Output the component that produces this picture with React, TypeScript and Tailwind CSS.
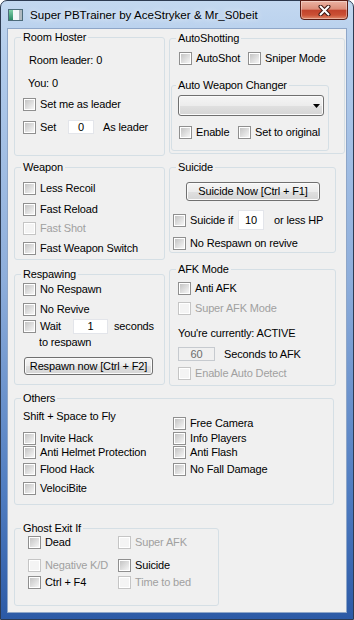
import clsx from 'clsx';
import type { ReactNode } from 'react';

// win7 style checkbox square
function Box({ disabled }: { disabled?: boolean }) {
  return (
    <span
      className={clsx(
        'flex h-[13px] w-[13px] shrink-0 items-center justify-center border bg-white',
        disabled ? 'border-[#c5c5c5]' : 'border-[#8f8f8f]'
      )}
    >
      <span
        className={clsx(
          'h-[9px] w-[9px]',
          disabled ? 'bg-[#f4f4f4]' : 'bg-linear-to-br from-[#c4c4c4] to-[#f6f6f6]'
        )}
      />
    </span>
  );
}

function Check({ label, disabled, className }: { label: string; disabled?: boolean; className?: string }) {
  return (
    <div className={clsx('flex h-[13px] items-center', className)}>
      <Box disabled={disabled} />
      <span className={clsx('ml-[4px] whitespace-nowrap leading-[13px]', disabled && 'text-[#a0a0a0]')}>{label}</span>
    </div>
  );
}

function Field({ children, className, disabled }: { children: ReactNode; className?: string; disabled?: boolean }) {
  return (
    <div
      className={clsx(
        'flex shrink-0 items-center justify-center border leading-[13px]',
        disabled ? 'border-[#c6cacf] bg-[#f0f0f0] text-[#6d6d6d]' : 'border-[#e3e5ea] bg-white',
        className
      )}
    >
      {children}
    </div>
  );
}

const buttonLook =
  'flex items-center justify-center rounded-[3px] border border-[#707070] bg-[linear-gradient(180deg,#f5f5f5_0%,#ececec_50%,#e0e0e0_51%,#d5d5d5_100%)] shadow-[inset_0_0_0_1px_#fbfbfb] leading-[13px]';

// group box: the title sits on the top border
function Group({
  title,
  className,
  titleClass,
  children,
}: {
  title: string;
  className?: string;
  titleClass?: string;
  children?: ReactNode;
}) {
  return (
    <div className={clsx('shrink-0 rounded-[3px] border border-[#d5dfe5]', className)}>
      <div className={clsx('-mt-[7px] w-fit bg-[#f0f0f0] px-[2px] leading-[13px]', titleClass ?? 'ml-[6px]')}>{title}</div>
      {children}
    </div>
  );
}

function TitleIcon() {
  return (
    <svg width="15" height="12" viewBox="0 0 15 12" className="ml-[1px] shrink-0">
      <defs>
        <linearGradient id="ic" x1="0" y1="0" x2="0" y2="1">
          <stop offset="0" stopColor="#7fcfa8" />
          <stop offset="1" stopColor="#2c8a66" />
        </linearGradient>
      </defs>
      <rect x="0.5" y="0.5" width="14" height="11" fill="#f4f7f9" stroke="#4d6b7a" />
      <rect x="1" y="1" width="4" height="10" fill="url(#ic)" />
      <rect x="11" y="1" width="3" height="10" fill="#aeb8bf" />
    </svg>
  );
}

function CloseButton() {
  return (
    <div className="-mr-[1px] -mt-[1px] flex h-[20px] w-[48px] shrink-0 items-center justify-center self-start rounded-b-[4px] border border-[#5a1d15] bg-[linear-gradient(180deg,#ebb3a3_0%,#dc8d79_45%,#c2432c_52%,#cb5035_78%,#e08a6c_100%)] shadow-[inset_0_0_0_1px_rgba(255,255,255,0.35)]">
      <svg width="13" height="11" viewBox="0 0 13 11">
        <path d="M2.5 1.5 L10.5 9.5 M10.5 1.5 L2.5 9.5" stroke="#3b1712" strokeWidth="4" strokeLinecap="round" />
        <path d="M2.5 1.5 L10.5 9.5 M10.5 1.5 L2.5 9.5" stroke="#ffffff" strokeWidth="2" strokeLinecap="round" />
      </svg>
    </div>
  );
}

export default function App() {
  return (
    <div className="flex h-[620px] w-[354px] flex-col rounded-t-[7px] border border-[#2d3b52] bg-[linear-gradient(180deg,#c3d8f0_0%,#b1cbeb_10%,#8eaedb_45%,#4f7cc0_80%,#2c5aa6_100%)] px-[6px] pb-[6px] font-['Liberation_Sans',Arial,sans-serif] text-[11px] text-black">
      <div className="flex h-[27px] shrink-0 items-center">
        <TitleIcon />
        <span className="ml-[7px] text-[11.6px] [text-shadow:0_0_6px_#ffffff]">Super PBTrainer by AceStryker &amp; Mr_S0beit</span>
        <div className="flex-1" />
        <CloseButton />
      </div>

      <div className="h-[585px] shrink-0 border border-[#8ea6c8] bg-[#f0f0f0] pl-[6px] tracking-[-0.15px]">
        <div className="flex items-start">
          <Group title="Room Hoster" className="mt-[8px] h-[119px] w-[151px]">
            <div className="ml-[14px] mt-[10px] leading-[13px]">Room leader: 0</div>
            <div className="ml-[13px] mt-[10px] leading-[13px]">You: 0</div>
            <Check className="ml-[8px] mt-[8px]" label="Set me as leader" />
            <div className="ml-[8px] mt-[9px] flex h-[14px] items-center">
              <Check className="w-[45px]" label="Set" />
              <Field className="h-[14px] w-[26px]">0</Field>
              <span className="ml-[9px] leading-[13px]">As leader</span>
            </div>
          </Group>

          <Group title="AutoShotting" className="ml-[4px] mt-[9px] h-[116px] w-[176px]">
            <div className="ml-[9px] mt-[7px] flex">
              <Check className="w-[69px]" label="AutoShot" />
              <Check label="Sniper Mode" />
            </div>
            <Group title="Auto Weapon Changer" titleClass="ml-[4px]" className="ml-[1px] mt-[20px] h-[66px] w-[158px]">
              <div className={clsx(buttonLook, 'ml-[6px] mt-[3px] h-[21px] w-[146px] justify-end pr-[3px]')}>
                <svg width="7" height="4" viewBox="0 0 7 4">
                  <path d="M0 0 H7 L3.5 4 Z" fill="#000" />
                </svg>
              </div>
              <div className="ml-[7px] mt-[10px] flex">
                <Check className="w-[59px]" label="Enable" />
                <Check label="Set to original" />
              </div>
            </Group>
          </Group>
        </div>

        <div className="flex items-start">
          <Group title="Weapon" className="mt-[11px] h-[93px] w-[151px]">
            <Check className="ml-[8px] mt-[8px]" label="Less Recoil" />
            <Check className="ml-[8px] mt-[8px]" label="Fast Reload" />
            <Check className="ml-[8px] mt-[6px]" label="Fast Shot" disabled />
            <Check className="ml-[8px] mt-[7px]" label="Fast Weapon Switch" />
          </Group>

          <Group title="Suicide" className="ml-[4px] mt-[11px] h-[86px] w-[167px]">
            <button className={clsx(buttonLook, 'ml-[16px] mt-[8px] h-[19px] w-[134px]')}>Suicide Now [Ctrl + F1]</button>
            <div className="ml-[3px] mt-[9px] flex h-[20px] items-center">
              <Check className="w-[65px]" label="Suicide if" />
              <Field className="h-[20px] w-[26px]">10</Field>
              <span className="ml-[10px] leading-[13px]">or less HP</span>
            </div>
            <Check className="ml-[3px] mt-[7px]" label="No Respawn on revive" />
          </Group>
        </div>

        <div className="flex items-start">
          <Group title="Respawing" className="mt-[14px] h-[111px] w-[151px]">
            <Check className="ml-[8px] mt-[2px]" label="No Respawn" />
            <Check className="ml-[8px] mt-[7px]" label="No Revive" />
            <div className="ml-[8px] mt-[3px] flex h-[15px] items-center">
              <Check className="w-[50px]" label="Wait" />
              <Field className="h-[15px] w-[35px]">1</Field>
              <span className="ml-[6px] leading-[13px]">seconds</span>
            </div>
            <div className="ml-[24px] mt-[2px] h-[11px] overflow-hidden leading-[13px]">to respawn</div>
            <button className={clsx(buttonLook, 'ml-[9px] mt-[10px] h-[18px] w-[129px]')}>Respawn now [Ctrl + F2]</button>
          </Group>

          <Group title="AFK Mode" className="ml-[4px] mt-[9px] h-[117px] w-[167px]">
            <Check className="ml-[8px] mt-[6px]" label="Anti AFK" />
            <Check className="ml-[8px] mt-[7px]" label="Super AFK Mode" disabled />
            <div className="ml-[8px] mt-[12px] leading-[13px]">You're currently: ACTIVE</div>
            <div className="ml-[8px] mt-[7px] flex h-[14px] items-center">
              <Field disabled className="h-[14px] w-[37px]">60</Field>
              <span className="ml-[9px] leading-[13px]">Seconds to AFK</span>
            </div>
            <Check className="ml-[8px] mt-[6px]" label="Enable Auto Detect" disabled />
          </Group>
        </div>

        <Group title="Others" className="mt-[12px] h-[107px] w-[320px]">
          <div className="flex">
            <div className="ml-[8px] w-[150px]">
              <div className="mt-[5px] leading-[13px]">Shift + Space to Fly</div>
              <Check className="mt-[9px]" label="Invite Hack" />
              <Check className="mt-[1px]" label="Anti Helmet Protection" />
              <Check className="mt-[4px]" label="Flood Hack" />
              <Check className="mt-[6px]" label="VelociBite" />
            </div>
            <div>
              <Check className="mt-[12px]" label="Free Camera" />
              <Check className="mt-[2px]" label="Info Players" />
              <Check className="mt-[1px]" label="Anti Flash" />
              <Check className="mt-[4px]" label="No Fall Damage" />
            </div>
          </div>
        </Group>

        <Group title="Ghost Exit If" className="mt-[23px] h-[78px] w-[205px]">
          <div className="ml-[13px] mt-[1px] flex">
            <Check className="w-[90px]" label="Dead" />
            <Check label="Super AFK" disabled />
          </div>
          <div className="ml-[13px] mt-[10px] flex">
            <Check className="w-[90px]" label="Negative K/D" disabled />
            <Check label="Suicide" />
          </div>
          <div className="ml-[13px] mt-[4px] flex">
            <Check className="w-[90px]" label="Ctrl + F4" />
            <Check label="Time to bed" disabled />
          </div>
        </Group>
      </div>
    </div>
  );
}
